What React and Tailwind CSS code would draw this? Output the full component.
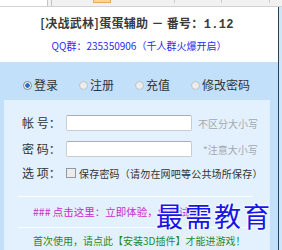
import { useState } from 'react';

const Radio = ({ checked }) => (
  <span
    className={
      'inline-block w-[9px] h-[9px] rounded-full border shrink-0 ' +
      (checked
        ? 'border-[#7a8a99] bg-[radial-gradient(circle,#2a6fc0_0,#2a6fc0_2px,#f4f4f4_2.5px)]'
        : 'border-[#b8c0c8] bg-[#ececec]')
    }
  />
);

const Row = ({ label, children }) => (
  <div className="flex items-center h-[18px] pl-[18px]">
    <span className="w-[44px] text-[12px] leading-[18px] text-[#333]">{label}</span>
    {children}
  </div>
);

const TextBox = () => (
  <div className="w-[126px] h-[16px] bg-white border border-[#c9ccd2] border-t-[#a9adb6] rounded-[2px]" />
);

export default function App() {
  const [mode] = useState('login');
  const tabs = [
    ['login', '登录'],
    ['reg', '注册'],
    ['pay', '充值'],
    ['pwd', '修改密码'],
  ];

  return (
    <div className="relative w-[282px] h-[250px] overflow-hidden bg-white font-['Noto_Sans_CJK_SC',sans-serif]">
      {/* top strip */}
      <div className="flex h-[7px] bg-[#f1f1f1] border-b border-[#d2d2d2]">
        <div className="w-[48px] h-[6px] bg-white border-r border-[#c4c4c4]" />
        <div className="w-[4px] h-[6px] border-r border-[#c4c4c4]" />
        <div className="ml-[41px] w-[18px] h-[3px] bg-[#fdd592] border border-t-0 border-[#e4ad5c]" />
        <div className="ml-[63px] w-px h-[3px] bg-[#cfcfcf]" />
        <div className="ml-[46px] w-px h-[3px] bg-[#cfcfcf]" />
        <div className="ml-[47px] w-px h-[3px] bg-[#cfcfcf]" />
      </div>

      <div className="flex">
        <div className="w-[278px]">
          {/* header */}
          <div className="h-[55px] bg-white flex flex-col items-center">
            <div className="mt-[8px] -ml-[4px] text-[12px] leading-[16px] font-bold text-[#3a3a3a] tracking-[0.3px]">
              [决战武林]蛋蛋辅助 － 番号：<span className="font-['Liberation_Mono',monospace]">1.12</span>
            </div>
            <div className="mt-[6px] text-[10px] leading-[14px] text-[#2b2bf0]">
              QQ群：235350906（千人群火爆开启）
            </div>
          </div>

          {/* blue area */}
          <div className="bg-[#c3e0fa] h-[188px]">
            <div className="flex items-center pt-[15px] h-[31px] pl-[23px] text-[12px] leading-[16px] text-[#333]">
              {tabs.map(([k, t], i) => (
                <div key={k} className={'flex items-center gap-[2px] ' + (i ? 'ml-[21px]' : '')}>
                  <Radio checked={mode === k} />
                  <span>{t}</span>
                </div>
              ))}
            </div>

            <div className="mt-[7px] ml-[4px] w-[266px] h-[150px] bg-[#e2f1fd] pt-[14px]">
              <Row label="帐 号：">
                <TextBox />
                <span className="ml-[6px] text-[10px] text-[#a3a8ae]">不区分大小写</span>
              </Row>
              <div className="mt-[8px]">
                <Row label="密 码：">
                  <TextBox />
                  <span className="ml-[11px] text-[10px] text-[#a3a8ae]">*注意大小写</span>
                </Row>
              </div>
              <div className="mt-[6px]">
                <Row label="选 项：">
                  <span className="w-[10px] h-[10px] border border-[#8f98a3] bg-[#ececec] shrink-0" />
                  <span className="ml-[3px] text-[10px] tracking-[0.2px] text-[#333]">
                    保存密码（请勿在网吧等公共场所保存）
                  </span>
                </Row>
              </div>

              <div className="mt-[14px] ml-[14px] w-[235px] h-px bg-[#fbfdff]" />
              <div className="mt-[7px] pl-[29px] text-[10.5px] leading-[16px] text-[#cc2ccc]">
                ### 点击这里：立即体验，免费试用
              </div>
              <div className="mt-[7px] ml-[14px] w-[235px] h-px bg-[#fbfdff]" />
              <div className="mt-[5px] pl-[29px] text-[10px] leading-[16px] text-[#1f8a1f]">
                首次使用，请点此【安装3D插件】才能进游戏！
              </div>
            </div>
          </div>
        </div>
        <div className="w-[4px] h-[243px] border-l border-[#23445a] bg-[#cfe6f9]" />
      </div>

      {/* watermark */}
      <div className="absolute left-[156px] top-[199px] text-[27px] leading-[34px] tracking-[2px] text-[#1616e6] font-['Noto_Sans_CJK_SC',serif] [text-shadow:0_0_2px_#fff,0_0_2px_#fff,0_0_3px_#fff]">
        最需教育
      </div>
    </div>
  );
}
